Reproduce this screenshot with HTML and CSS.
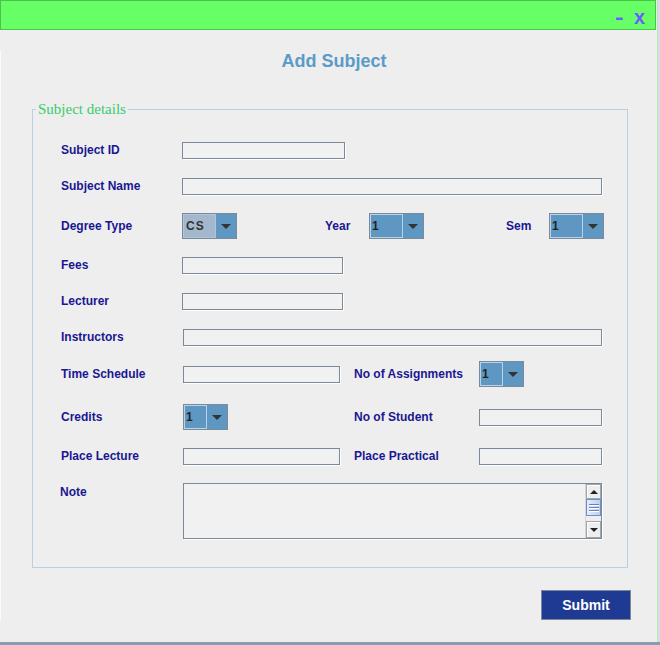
FILE: index.html
```html
<!DOCTYPE html>
<html>
<head>
<meta charset="utf-8">
<title>Add Subject</title>
<link rel="stylesheet" href="styles.css">
</head>
<body>
<div class="screen">
  <div class="window">
    <div class="titlebar">
      <span class="tb-btn tb-min">-</span>
      <span class="tb-btn tb-close">x</span>
    </div>
    <div class="content">
      <h1 class="title">Add Subject</h1>
      <fieldset class="details">
        <legend class="legend">Subject details</legend>
        <div class="form">
          <div class="row">
            <span class="lbl">Subject ID</span>
            <div class="field w163"></div>
          </div>
          <div class="row">
            <span class="lbl">Subject Name</span>
            <div class="field w420"></div>
          </div>
          <div class="row-degree">
            <span class="lbl">Degree Type</span>
            <div class="combo w55">
              <div class="combo-value combo-value-cs">CS</div>
              <div class="combo-arrow"></div>
            </div>
            <span class="lbl">Year</span>
            <div class="combo w55">
              <div class="combo-value">1</div>
              <div class="combo-arrow"></div>
            </div>
            <span class="lbl">Sem</span>
            <div class="combo w55">
              <div class="combo-value">1</div>
              <div class="combo-arrow"></div>
            </div>
          </div>
          <div class="row">
            <span class="lbl">Fees</span>
            <div class="field w161"></div>
          </div>
          <div class="row">
            <span class="lbl">Lecturer</span>
            <div class="field w161"></div>
          </div>
          <div class="row">
            <span class="lbl lbl-wide">Instructors</span>
            <div class="field w419"></div>
          </div>
          <div class="row-pair">
            <span class="lbl">Time Schedule</span>
            <div class="field w157"></div>
            <span class="lbl">No of Assignments</span>
            <div class="combo w45">
              <div class="combo-value">1</div>
              <div class="combo-arrow"></div>
            </div>
          </div>
          <div class="row-pair">
            <span class="lbl">Credits</span>
            <div class="combo w45">
              <div class="combo-value">1</div>
              <div class="combo-arrow"></div>
            </div>
            <span class="lbl">No of Student</span>
            <div class="field w123"></div>
          </div>
          <div class="row-pair">
            <span class="lbl">Place Lecture</span>
            <div class="field w157"></div>
            <span class="lbl">Place Practical</span>
            <div class="field w123"></div>
          </div>
          <div class="row-note">
            <span class="lbl lbl-wide lbl-note">Note</span>
            <div class="note">
              <div class="note-text"></div>
              <div class="scrollbar">
                <div class="sb-btn sb-up"><span class="tri-up"></span></div>
                <div class="sb-thumb">
                  <span class="grip"></span>
                  <span class="grip"></span>
                  <span class="grip"></span>
                </div>
                <div class="sb-track"></div>
                <div class="sb-btn sb-down"><span class="tri-down"></span></div>
              </div>
            </div>
          </div>
        </div>
      </fieldset>
      <div class="actions">
        <button class="submit" type="button">Submit</button>
      </div>
    </div>
  </div>
  <div class="taskbar"></div>
</div>
</body>
</html>
```

FILE: styles.css
```css
html, body {
  margin: 0;
  padding: 0;
}

body {
  background: #dcd8f0;
  font-family: "Liberation Sans", Arial, sans-serif;
}

.screen {
  width: 660px;
  height: 645px;
  display: flex;
  flex-direction: column;
  overflow: hidden;
}

.window {
  width: 658px;
  height: 642px;
  background: #eeeeee;
  border-right: 1px solid #b0eeb0;
  box-sizing: border-box;
}

.taskbar {
  width: 660px;
  height: 3px;
  background: #8a9bb3;
}

.titlebar {
  width: 656px;
  height: 30px;
  box-sizing: border-box;
  background: #66ff66;
  border: 1px solid #4cc44c;
  display: flex;
  justify-content: flex-end;
  align-items: flex-start;
  padding: 6px 10px 0 0;
}

.tb-btn {
  font-family: "Liberation Sans", Arial, sans-serif;
  font-weight: bold;
  font-size: 20px;
  line-height: 20px;
  color: #6a5cff;
}

.tb-min {
  margin-right: 11px;
  transform: scaleX(1.3);
}

.content {
  padding-left: 32px;
  border-left: 1px solid #fafafa;
  margin-left: 0;
}

.title {
  margin: 20px 0 0 0;
  width: 596px;
  box-sizing: border-box;
  padding-left: 8px;
  text-align: center;
  font-size: 18px;
  line-height: 22px;
  font-weight: bold;
  color: #5b9bc8;
  margin-left: -1px;
}

.details {
  margin: 29px 0 0 -1px;
  padding: 0;
  width: 596px;
  box-sizing: border-box;
  border: 1px solid #b8cfe5;
  min-width: 0;
}

.legend {
  margin-left: 3px;
  padding: 0 2px;
  font-family: "Liberation Serif", "Times New Roman", serif;
  font-size: 15px;
  line-height: 16px;
  color: #37cc6c;
}

.form {
  padding: 15px 0 28px 28px;
  display: grid;
  grid-template-rows: 36px 36px 44px 34px 38px 34px 40px 46px 32px auto;
}

.row {
  display: flex;
  align-items: center;
}

.row-degree {
  display: grid;
  grid-template-columns: 121px 143px 44px 137px 43px 55px;
  align-items: center;
  justify-items: start;
}

.row-pair {
  display: grid;
  grid-template-columns: 122px 171px 125px auto;
  align-items: center;
  justify-items: start;
}

.row-note {
  display: flex;
  align-items: flex-start;
  padding-top: 11px;
}

.lbl {
  width: 121px;
  flex: none;
  font-size: 12px;
  line-height: 14px;
  font-weight: bold;
  color: #1a1792;
  white-space: nowrap;
}

.lbl-wide {
  width: 122px;
}

.lbl-note {
  margin-top: 2px;
  margin-left: -1px;
  width: 123px;
}

.field {
  height: 17px;
  box-sizing: border-box;
  border: 1px solid #7a8a99;
  background: #f1f1f1;
  box-shadow: 1px 1px 0 #ffffff;
}

.w163 { width: 163px; }
.w161 { width: 161px; }
.w157 { width: 157px; }
.w123 { width: 123px; }
.w420 { width: 420px; }
.w419 { width: 419px; }
.w55 { width: 55px; }
.w45 { width: 45px; }

.combo {
  display: flex;
  height: 26px;
  box-sizing: border-box;
  border: 1px solid #7a8a99;
  background: #5e97c2;
}

.combo-value {
  flex: 1;
  border: 1px solid #b9d2ea;
  display: flex;
  align-items: center;
  padding-left: 1px;
  font-size: 12px;
  font-weight: bold;
  color: #222222;
}

.combo-value-cs {
  background: #a3b8cc;
  border-color: #b3c6d8;
  color: #333333;
  letter-spacing: 1px;
  padding-left: 2px;
}

.combo-arrow {
  width: 20px;
  flex: none;
  display: flex;
  align-items: center;
  justify-content: center;
}

.combo-arrow::after {
  content: "";
  width: 0;
  height: 0;
  border-left: 5px solid transparent;
  border-right: 5px solid transparent;
  border-top: 5px solid #333333;
}

.note {
  width: 419px;
  height: 56px;
  box-sizing: border-box;
  border: 1px solid #7a8a99;
  background: #f1f1f1;
  box-shadow: 1px 1px 0 #ffffff;
  display: flex;
}

.note-text {
  flex: 1;
}

.scrollbar {
  width: 15px;
  display: flex;
  flex-direction: column;
  background: #eeeeee;
  border-left: 1px solid #d6d6d6;
}

.sb-btn {
  box-sizing: border-box;
  background: #eeeeee;
  border: 1px solid #9aa6b2;
  box-shadow: inset 1px 1px 0 #ffffff;
  display: flex;
  align-items: center;
  justify-content: center;
}

.sb-up {
  height: 15px;
}

.sb-down {
  height: 17px;
}

.tri-up {
  width: 0;
  height: 0;
  border-left: 4px solid transparent;
  border-right: 4px solid transparent;
  border-bottom: 4px solid #222222;
}

.tri-down {
  width: 0;
  height: 0;
  border-left: 4px solid transparent;
  border-right: 4px solid transparent;
  border-top: 4px solid #222222;
}

.sb-thumb {
  height: 17px;
  box-sizing: border-box;
  border: 1px solid #6d8fcb;
  background: linear-gradient(to right, #e4ecf7, #bcd0ea);
  display: flex;
  flex-direction: column;
  justify-content: center;
  align-items: center;
  gap: 2px;
}

.grip {
  width: 10px;
  height: 1px;
  background: #6a7fbf;
  box-shadow: 0 1px 0 #ffffff;
}

.sb-track {
  flex: 1;
  background: #eeeeee;
}

.actions {
  width: 598px;
  display: flex;
  justify-content: flex-end;
  margin-top: 22px;
}

.submit {
  width: 90px;
  height: 30px;
  box-sizing: border-box;
  border: 1px solid #7a8a99;
  background: #1f3a93;
  color: #ffffff;
  font-family: "Liberation Sans", Arial, sans-serif;
  font-size: 14px;
  font-weight: bold;
  padding: 0;
  margin: 0;
}
```
